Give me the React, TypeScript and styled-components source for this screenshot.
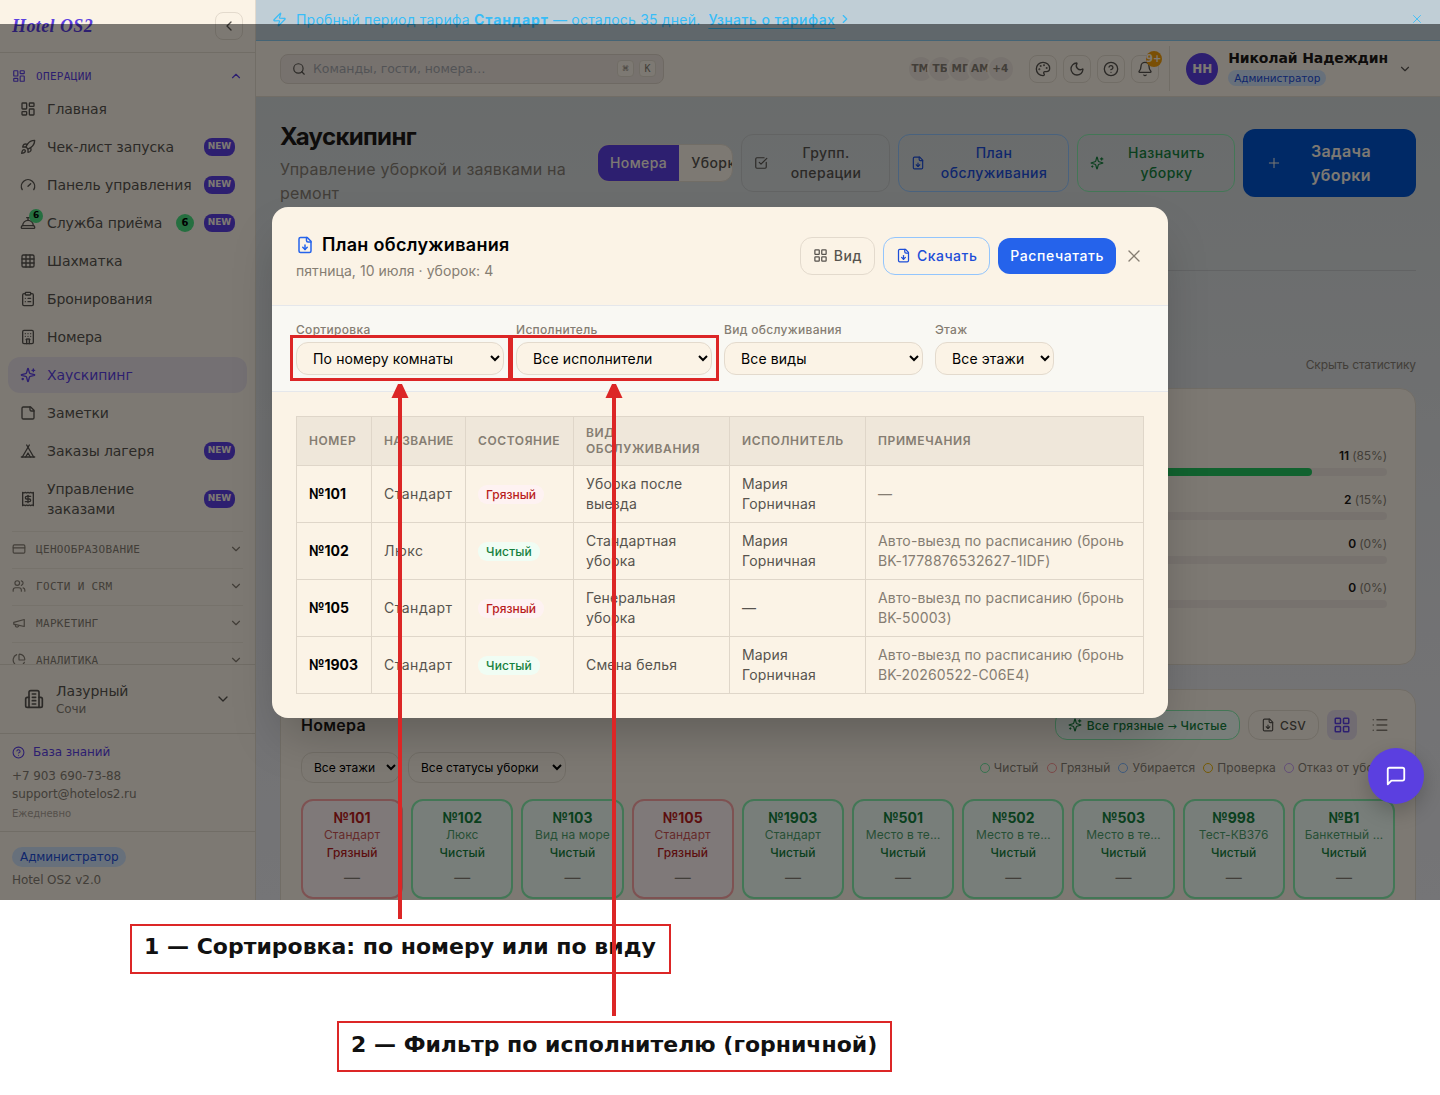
import React from "react";
import styled, { createGlobalStyle, css } from "styled-components";
import {
    Bell,
    ChartPie,
    ChevronDown,
    ChevronLeft,
    ChevronRight,
    ChevronUp,
    CircleQuestionMark,
    ClipboardList,
    ConciergeBell,
    CreditCard,
    Gauge,
    Grid3x3,
    Hotel,
    LayoutDashboard,
    LayoutGrid,
    List,
    Moon,
    Palette,
    Plus,
    Rocket,
    Search,
    SquareCheckBig,
    Tent,
    Users,
    X,
    Zap,
} from "lucide-react";

const colors = {
    cream: "#fbf3e6",
    line: "#e3dacd",
    faintLine: "#ede4d7",
    text: "#57534e",
    muted: "#857d72",
    violet: "#5b3fe0",
    red: "#dc2626",
};

const uiFont = `"DejaVu Sans", sans-serif`;
const inter = `Inter, "DejaVu Sans", sans-serif`;

type IconProps = { size?: number };
type IconType = React.ComponentType<IconProps>;

const strokeIcon = (...paths: string[]): IconType => {
    const StrokeIcon: React.FC<IconProps> = ({ size = 16 }) => (
        <svg
            width={size}
            height={size}
            viewBox="0 0 24 24"
            fill="none"
            stroke="currentColor"
            strokeWidth="2"
            strokeLinecap="round"
            strokeLinejoin="round"
        >
            {paths.map(d => (
                <path key={d} d={d} />
            ))}
        </svg>
    );

    return StrokeIcon;
};

const Sparkles = strokeIcon(
    "M9.937 15.5A2 2 0 0 0 8.5 14.063l-6.135-1.582a.5.5 0 0 1 0-.962L8.5 9.936A2 2 0 0 0 9.937 8.5l1.582-6.135a.5.5 0 0 1 .963 0L14.063 8.5A2 2 0 0 0 15.5 9.937l6.135 1.581a.5.5 0 0 1 0 .964L15.5 14.063a2 2 0 0 0-1.437 1.437l-1.582 6.135a.5.5 0 0 1-.963 0z",
    "M20 3v4",
    "M22 5h-4",
    "M4 17v2",
    "M5 18H3"
);

const FileDown = strokeIcon(
    "M15 2H6a2 2 0 0 0-2 2v16a2 2 0 0 0 2 2h12a2 2 0 0 0 2-2V7Z",
    "M14 2v4a2 2 0 0 0 2 2h4",
    "M12 18v-6",
    "m9 15 3 3 3-3"
);

const StickyNote = strokeIcon(
    "M16 3H5a2 2 0 0 0-2 2v14a2 2 0 0 0 2 2h14a2 2 0 0 0 2-2V8Z",
    "M15 3v4a2 2 0 0 0 2 2h4"
);

const Receipt = strokeIcon(
    "M4 2v20l2-1 2 1 2-1 2 1 2-1 2 1 2-1 2 1V2l-2 1-2-1-2 1-2-1-2 1-2-1-2 1Z",
    "M16 8h-6a2 2 0 1 0 0 4h4a2 2 0 1 1 0 4H8",
    "M12 17.5v-11"
);

const Megaphone = strokeIcon("m3 11 18-5v12L3 14v-3z", "M11.6 16.8a3 3 0 1 1-5.8-1.6");

const Building = strokeIcon(
    "M6 22V4a2 2 0 0 1 2-2h8a2 2 0 0 1 2 2v18Z",
    "M6 10H4a2 2 0 0 0-2 2v8a2 2 0 0 0 2 2h2",
    "M18 10h2a2 2 0 0 1 2 2v8a2 2 0 0 1-2 2h-2",
    "M10 6h4",
    "M10 10h4",
    "M10 14h4",
    "M10 18h4"
);

const MessageSquare = strokeIcon("M21 15a2 2 0 0 1-2 2H7l-4 4V5a2 2 0 0 1 2-2h14a2 2 0 0 1 2 2z");

type NavItem = {
    icon: IconType;
    label: string;
    isNew?: boolean;
    count?: number;
    active?: boolean;
};

const navItems: NavItem[] = [
    { icon: LayoutDashboard, label: "Главная" },
    { icon: Rocket, label: "Чек-лист запуска", isNew: true },
    { icon: Gauge, label: "Панель управления", isNew: true },
    { icon: ConciergeBell, label: "Служба приёма", isNew: true, count: 6 },
    { icon: Grid3x3, label: "Шахматка" },
    { icon: ClipboardList, label: "Бронирования" },
    { icon: Hotel, label: "Номера" },
    { icon: Sparkles, label: "Хаускипинг", active: true },
    { icon: StickyNote, label: "Заметки" },
    { icon: Tent, label: "Заказы лагеря", isNew: true },
    { icon: Receipt, label: "Управление заказами", isNew: true },
];

const navGroups: { icon: IconType; label: string }[] = [
    { icon: CreditCard, label: "Ценообразование" },
    { icon: Users, label: "Гости и CRM" },
    { icon: Megaphone, label: "Маркетинг" },
    { icon: ChartPie, label: "Аналитика" },
];

const stats = [
    { count: 11, percent: 85 },
    { count: 2, percent: 15 },
    { count: 0, percent: 0 },
    { count: 0, percent: 0 },
];

const legend = [
    { label: "Чистый", color: "#6ee7a0" },
    { label: "Грязный", color: "#f99393" },
    { label: "Убирается", color: "#7fb5fb" },
    { label: "Проверка", color: "#eab308" },
    { label: "Отказ от уборки", color: "#c79df3" },
];

const rooms = [
    { number: "№101", type: "Стандарт", dirty: true },
    { number: "№102", type: "Люкс" },
    { number: "№103", type: "Вид на море" },
    { number: "№105", type: "Стандарт", dirty: true },
    { number: "№1903", type: "Стандарт" },
    { number: "№501", type: "Место в те…" },
    { number: "№502", type: "Место в те…" },
    { number: "№503", type: "Место в те…" },
    { number: "№998", type: "Тест-КВ376" },
    { number: "№B1", type: "Банкетный …" },
];

const tasks = [
    { number: "№101", type: "Стандарт", dirty: true, service: "Уборка после выезда", assignee: "Мария Горничная", note: "—" },
    { number: "№102", type: "Люкс", dirty: false, service: "Стандартная уборка", assignee: "Мария Горничная", note: "Авто-выезд по расписанию (бронь BK-1778876532627-1IDF)" },
    { number: "№105", type: "Стандарт", dirty: true, service: "Генеральная уборка", assignee: "—", note: "Авто-выезд по расписанию (бронь BK-50003)" },
    { number: "№1903", type: "Стандарт", dirty: false, service: "Смена белья", assignee: "Мария Горничная", note: "Авто-выезд по расписанию (бронь BK-20260522-C06E4)" },
];

const filters = [
    { label: "Сортировка", value: "По номеру комнаты", width: 208 },
    { label: "Исполнитель", value: "Все исполнители", width: 196 },
    { label: "Вид обслуживания", value: "Все виды", width: 199 },
    { label: "Этаж", value: "Все этажи", width: 119 },
];

const Sidebar: React.FC = () => (
    <Aside>
        <Brand>
            <Logo>Hotel OS2</Logo>
            <CollapseButton>
                <ChevronLeft size={16} />
            </CollapseButton>
        </Brand>
        <Nav>
            <GroupTitle $open>
                <LayoutDashboard size={14} />
                <span>Операции</span>
                <ChevronUp size={14} />
            </GroupTitle>
            {navItems.map(({ icon: Icon, label, isNew, count, active }) => (
                <NavLink key={label} $active={active}>
                    <NavIcon>
                        <Icon size={16} />
                        {count && <IconCount>{count}</IconCount>}
                    </NavIcon>
                    <NavLabel>{label}</NavLabel>
                    {count && <Count>{count}</Count>}
                    {isNew && <NewBadge>NEW</NewBadge>}
                </NavLink>
            ))}
            {navGroups.map(({ icon: Icon, label }) => (
                <GroupTitle key={label}>
                    <Icon size={14} />
                    <span>{label}</span>
                    <ChevronDown size={14} />
                </GroupTitle>
            ))}
        </Nav>
        <Property>
            <Building size={20} />
            <PropertyText>
                <strong>Лазурный</strong>
                <span>Сочи</span>
            </PropertyText>
            <ChevronDown size={16} />
        </Property>
        <Support>
            <HelpLink>
                <CircleQuestionMark size={13} />
                База знаний
            </HelpLink>
            <span>+7 903 690-73-88</span>
            <span>support@hotelos2.ru</span>
            <small>Ежедневно</small>
        </Support>
        <Version>
            <RolePill $size={12}>Администратор</RolePill>
            <span>Hotel OS2 v2.0</span>
        </Version>
    </Aside>
);

const TopBar: React.FC = () => (
    <Header>
        <SearchBox>
            <Search size={14} />
            <span>Команды, гости, номера…</span>
            <Key>⌘</Key>
            <Key>K</Key>
        </SearchBox>
        <Avatars>
            {["TM", "ТБ", "МГ", "AM", "+4"].map(name => (
                <Avatar key={name}>{name}</Avatar>
            ))}
        </Avatars>
        <IconButtons>
            <IconButton>
                <Palette size={16} />
            </IconButton>
            <IconButton>
                <Moon size={16} />
            </IconButton>
            <IconButton>
                <CircleQuestionMark size={16} />
            </IconButton>
            <IconButton>
                <Bell size={16} />
                <BellCount>9+</BellCount>
            </IconButton>
        </IconButtons>
        <User>
            <UserAvatar>НН</UserAvatar>
            <UserText>
                <UserName>Николай Надеждин</UserName>
                <RolePill $size={10.5}>Администратор</RolePill>
            </UserText>
            <ChevronDown size={14} />
        </User>
    </Header>
);

const RoomsCard: React.FC = () => (
    <RoomsPanel>
        <RoomsHead>
            <h2>Номера</h2>
            <PillButton $tone="green">
                <Sparkles size={14} />
                <span>
                    Все грязные <Arrow>→</Arrow> Чистые
                </span>
            </PillButton>
            <PillButton>
                <FileDown size={14} />
                CSV
            </PillButton>
            <ViewSwitch>
                <ViewButton $active>
                    <LayoutGrid size={18} />
                </ViewButton>
                <ViewButton>
                    <List size={18} />
                </ViewButton>
            </ViewSwitch>
        </RoomsHead>
        <RoomsFilters>
            <Select $width={99} $small defaultValue="a">
                <option value="a">Все этажи</option>
            </Select>
            <Select $width={158} $small defaultValue="a">
                <option value="a">Все статусы уборки</option>
            </Select>
            <Legend>
                {legend.map(({ label, color }) => (
                    <LegendItem key={label} $color={color}>
                        {label}
                    </LegendItem>
                ))}
            </Legend>
        </RoomsFilters>
        <RoomGrid>
            {rooms.map(({ number, type, dirty }) => (
                <Room key={number} $dirty={dirty}>
                    <RoomNumber>{number}</RoomNumber>
                    <RoomType>{type}</RoomType>
                    <RoomState>{dirty ? "Грязный" : "Чистый"}</RoomState>
                    <RoomGuest>—</RoomGuest>
                </Room>
            ))}
        </RoomGrid>
    </RoomsPanel>
);

const PlanDialog: React.FC = () => (
    <Dialog role="dialog">
        <DialogHead>
            <DialogTitles>
                <DialogTitle>
                    <FileDown size={18} />
                    План обслуживания
                </DialogTitle>
                <DialogDate>пятница, 10 июля · уборок: 4</DialogDate>
            </DialogTitles>
            <DialogButton>
                <LayoutGrid size={15} />
                Вид
            </DialogButton>
            <DialogButton $tone="outline">
                <FileDown size={15} />
                Скачать
            </DialogButton>
            <DialogButton $tone="primary">Распечатать</DialogButton>
            <CloseButton>
                <X size={20} strokeWidth={1.6} />
            </CloseButton>
        </DialogHead>
        <DialogFilters>
            {filters.map(({ label, value, width }) => (
                <Field key={label}>
                    {label}
                    <Select $width={width} defaultValue={value}>
                        <option value={value}>{value}</option>
                    </Select>
                </Field>
            ))}
        </DialogFilters>
        <DialogBody>
            <Table>
                <colgroup>
                    {[75, 94, 108, 156, 136, 278].map(width => (
                        <col key={width} width={width} />
                    ))}
                </colgroup>
                <thead>
                    <tr>
                        <th>Номер</th>
                        <th>Название</th>
                        <th>Состояние</th>
                        <th>Вид обслуживания</th>
                        <th>Исполнитель</th>
                        <th>Примечания</th>
                    </tr>
                </thead>
                <tbody>
                    {tasks.map(task => (
                        <tr key={task.number}>
                            <RoomCell>{task.number}</RoomCell>
                            <TypeCell>{task.type}</TypeCell>
                            <td>
                                <StateChip $dirty={task.dirty}>{task.dirty ? "Грязный" : "Чистый"}</StateChip>
                            </td>
                            <td>{task.service}</td>
                            <td>{task.assignee}</td>
                            <NoteCell>{task.note}</NoteCell>
                        </tr>
                    ))}
                </tbody>
            </Table>
        </DialogBody>
    </Dialog>
);

const App: React.FC = () => (
    <Sheet>
        <GlobalStyle />
        <Screen>
            <Sidebar />
            <Main>
                <TrialBanner>
                    <Zap size={15} />
                    <span>
                        Пробный период тарифа <b>Стандарт</b> — осталось 35 дней.
                    </span>
                    <TrialLink>Узнать о тарифах</TrialLink>
                    <ChevronRight size={14} />
                    <TrialClose>
                        <X size={14} strokeWidth={1.5} />
                    </TrialClose>
                </TrialBanner>
                <TopBar />
                <Content>
                    <PageHead>
                        <PageTitles>
                            <h1>Хаускипинг</h1>
                            <p>Управление уборкой и заявками на ремонт</p>
                        </PageTitles>
                        <Toggle>
                            <ToggleItem $active>Номера</ToggleItem>
                            <ToggleItem>Уборки</ToggleItem>
                        </Toggle>
                        <ActionButton $width={149}>
                            <SquareCheckBig size={14} />
                            <span>Групп. операции</span>
                        </ActionButton>
                        <ActionButton $width={171} $tone="blue">
                            <FileDown size={14} />
                            <span>План обслуживания</span>
                        </ActionButton>
                        <ActionButton $width={158} $tone="green">
                            <Sparkles size={14} />
                            <span>Назначить уборку</span>
                        </ActionButton>
                        <ActionButton $width={173} $tone="primary">
                            <Plus size={16} strokeWidth={1.5} />
                            <span>Задача уборки</span>
                        </ActionButton>
                    </PageHead>
                    <Tabs />
                    <StatsToggle>Скрыть статистику</StatsToggle>
                    <StatsPanel>
                        <StatsList>
                            {stats.map(({ count, percent }, index) => (
                                <Stat key={index}>
                                    <StatValue>
                                        <b>{count}</b> ({percent}%)
                                    </StatValue>
                                    <Track>
                                        <Fill style={{ width: `${percent}%` }} />
                                    </Track>
                                </Stat>
                            ))}
                        </StatsList>
                    </StatsPanel>
                    <RoomsCard />
                </Content>
            </Main>
            <Backdrop>
                <PlanDialog />
            </Backdrop>
            <ChatButton>
                <MessageSquare size={22} />
            </ChatButton>
        </Screen>
        <Callout $left={130} $top={24} $width={541}>
            1 — Сортировка: по номеру или по виду
        </Callout>
        <Callout $left={337} $top={47} $width={555}>
            2 — Фильтр по исполнителю (горничной)
        </Callout>
        <Marks width="1440" height="1095" viewBox="0 0 1440 1095">
            <g fill="none" stroke={colors.red} strokeWidth="3">
                <rect x="291.5" y="336.5" width="218" height="43" />
                <rect x="511.5" y="336.5" width="206" height="43" />
            </g>
            <g fill={colors.red}>
                <rect x="398" y="384" width="4" height="535" />
                <path d="M398 384h4l6.5 14h-17z" />
                <rect x="612" y="384" width="4" height="632" />
                <path d="M612 384h4l6.5 14h-17z" />
            </g>
        </Marks>
    </Sheet>
);

const GlobalStyle = createGlobalStyle`
    *,
    *::before {
        box-sizing: border-box;
    }

    body {
        margin: 0;
        background: #fff;
        font-family: ${inter};
        color: ${colors.text};
    }

    h1, h2, p {
        margin: 0;
    }

    svg {
        flex: none;
    }
`;

const Sheet = styled.div`
    position: relative;
    width: 1440px;
    height: 1095px;
    overflow: hidden;
`;

const Screen = styled.div`
    position: relative;
    display: flex;
    width: 1440px;
    height: 900px;
    overflow: hidden;
`;

const Aside = styled.aside`
    display: flex;
    flex-direction: column;
    width: 256px;
    border-right: 1px solid ${colors.line};
    background: ${colors.cream};
    font-family: ${uiFont};
    letter-spacing: -0.08px;
`;

const Brand = styled.div`
    display: flex;
    align-items: center;
    justify-content: space-between;
    height: 53px;
    padding: 0 12px;
    border-bottom: 1px solid ${colors.line};
`;

const Logo = styled.div`
    color: ${colors.violet};
    font: italic 700 18px "Liberation Serif", serif;
    letter-spacing: 0.4px;
`;

const CollapseButton = styled.div`
    display: grid;
    place-items: center;
    width: 28px;
    height: 28px;
    border: 1px solid ${colors.line};
    border-radius: 8px;
`;

const Nav = styled.nav`
    flex: 1;
    min-height: 0;
    overflow: hidden;
    padding: 8px 8px 0;
`;

const GroupTitle = styled.div<{ $open?: boolean }>`
    display: flex;
    align-items: center;
    gap: 10px;
    height: ${props => (props.$open ? "30px" : "37px")};
    margin: 0 4px;
    padding-bottom: ${props => (props.$open ? "0" : "2px")};
    border-top: ${props => (props.$open ? "none" : `1px solid ${colors.faintLine}`)};
    color: ${props => (props.$open ? colors.violet : colors.muted)};
    font: 11px "DejaVu Sans Mono", monospace;
    letter-spacing: 0.33px;
    text-transform: uppercase;

    span {
        flex: 1;
    }
`;

const NavLink = styled.div<{ $active?: boolean }>`
    display: flex;
    align-items: center;
    min-height: 36px;
    margin-bottom: 2px;
    padding: 8px 12px;
    border-radius: 12px;
    background: ${props => (props.$active ? "#e9e1e6" : "none")};
    color: ${props => (props.$active ? colors.violet : colors.text)};
    font-size: 14px;
    line-height: 20px;

    &:nth-last-child(5) {
        margin-bottom: 4px;
    }
`;

const NavIcon = styled.span`
    position: relative;
    display: flex;
    margin-right: 11px;
`;

const IconCount = styled.span`
    position: absolute;
    top: -6px;
    right: -7px;
    width: 14px;
    height: 14px;
    border-radius: 50%;
    background: #4ade80;
    color: #000;
    font-size: 9px;
    font-weight: 700;
    line-height: 13px;
    text-align: center;
`;

const NavLabel = styled.span`
    flex: 1;
`;

const Count = styled.span`
    width: 18px;
    height: 18px;
    margin-right: 10px;
    border-radius: 50%;
    background: #4ade80;
    color: #000;
    font-size: 10px;
    font-weight: 700;
    line-height: 18px;
    text-align: center;
`;

const NewBadge = styled.span`
    width: 31px;
    height: 18px;
    border-radius: 8px;
    background: ${colors.violet};
    color: ${colors.cream};
    font-size: 9px;
    font-weight: 700;
    line-height: 16px;
    text-align: center;
`;

const Property = styled.div`
    display: flex;
    align-items: center;
    gap: 12px;
    height: 69px;
    padding: 0 24px;
    border-top: 1px solid ${colors.line};
`;

const PropertyText = styled.div`
    display: flex;
    flex: 1;
    flex-direction: column;

    strong {
        font-size: 14px;
        font-weight: 400;
        line-height: 20px;
    }

    span {
        color: ${colors.muted};
        font-size: 12px;
        line-height: 16px;
    }
`;

const Support = styled.div`
    display: flex;
    flex-direction: column;
    height: 98px;
    padding: 10px 12px 0;
    border-top: 1px solid ${colors.line};
    color: ${colors.muted};
    font-size: 12px;
    line-height: 18px;

    small {
        margin-top: 2px;
        color: #aaa196;
        font-size: 10px;
    }
`;

const HelpLink = styled.div`
    display: flex;
    align-items: center;
    gap: 8px;
    height: 16px;
    margin-bottom: 7px;
    color: ${colors.violet};
`;

const Version = styled.div`
    display: flex;
    flex-direction: column;
    align-items: flex-start;
    gap: 4px;
    height: 69px;
    padding: 15px 12px 0;
    border-top: 1px solid ${colors.line};
    color: ${colors.muted};
    font-size: 12px;
    line-height: 18px;
`;

const RolePill = styled.span<{ $size: number }>`
    padding: ${props => (props.$size > 11 ? "1px 8px" : "0 6px")};
    border-radius: 10px;
    background: #cfe0f7;
    color: #1d4ed8;
    font-size: ${props => props.$size}px;
    line-height: ${props => (props.$size > 11 ? "18px" : "16px")};
    letter-spacing: -0.08px;
`;

const Main = styled.main`
    display: flex;
    flex: 1;
    flex-direction: column;
    min-width: 0;
    background: linear-gradient(180deg, #d3d8d8 10%, #e5e5e8 70%, #eaeaee 100%);
`;

const TrialBanner = styled.div`
    display: flex;
    flex: none;
    align-items: center;
    height: 41px;
    padding: 0 16px 2px;
    border-bottom: 1px solid #8ac9ea;
    background: #c0ced6;
    color: #38bdf8;
    font-size: 14px;
    letter-spacing: 0.2px;

    > svg:first-child {
        margin-right: 9px;
    }

    b {
        letter-spacing: 0.9px;
    }
`;

const TrialLink = styled.span`
    margin: 0 3px 0 8px;
    font-weight: 500;
    letter-spacing: 0.45px;
    text-decoration: underline;
    text-underline-offset: 3px;
`;

const TrialClose = styled.span`
    display: flex;
    margin-left: auto;
`;

const Header = styled.header`
    display: flex;
    flex: none;
    align-items: center;
    height: 56px;
    padding: 0 28px 0 24px;
    border-bottom: 1px solid ${colors.line};
    background: ${colors.cream};
    font-family: ${uiFont};
`;

const SearchBox = styled.div`
    display: flex;
    align-items: center;
    gap: 5px;
    width: 384px;
    height: 30px;
    padding: 0 7px 0 11px;
    border: 1px solid #ddd3c7;
    border-radius: 8px;
    background: #efe5dc;
    color: ${colors.text};

    > span:nth-child(2) {
        flex: 1;
        margin-left: 2px;
        color: #a5a7ac;
        font-size: 12.5px;
        letter-spacing: -0.06px;
    }
`;

const Key = styled.span`
    width: 17px;
    height: 17px;
    border: 1px solid ${colors.line};
    border-radius: 4px;
    background: ${colors.cream};
    color: ${colors.muted};
    font: 10px/15px "DejaVu Sans Mono", monospace;
    text-align: center;
`;

const Avatars = styled.div`
    display: flex;
    margin-left: auto;
`;

const Avatar = styled.span`
    width: 28px;
    height: 28px;
    margin-right: -8px;
    border: 2px solid ${colors.cream};
    border-radius: 50%;
    background: #efe5dc;
    color: ${colors.muted};
    font-size: 10.5px;
    font-weight: 700;
    line-height: 23px;
    text-align: center;
    text-indent: -2px;
    overflow: hidden;
`;

const IconButtons = styled.div`
    display: flex;
    gap: 6px;
    margin: 0 10px 0 22px;
`;

const IconButton = styled.span`
    position: relative;
    display: grid;
    place-items: center;
    width: 28px;
    height: 28px;
    border: 1px solid ${colors.line};
    border-radius: 8px;
`;

const BellCount = styled.span`
    position: absolute;
    top: -5px;
    right: -4px;
    width: 16px;
    height: 16px;
    border-radius: 50%;
    background: #f59e0b;
    color: ${colors.cream};
    font-size: 10px;
    font-weight: 700;
    line-height: 16px;
    text-align: center;
    text-indent: -1px;
`;

const User = styled.div`
    display: flex;
    align-items: center;
    gap: 10px;
    height: 45px;
    padding-left: 16px;
    border-left: 1px solid ${colors.line};
`;

const UserAvatar = styled.span`
    width: 32px;
    height: 32px;
    border-radius: 50%;
    background: ${colors.violet};
    color: ${colors.cream};
    font-size: 12px;
    font-weight: 700;
    line-height: 32px;
    text-align: center;
`;

const UserText = styled.div`
    display: flex;
    flex-direction: column;
    align-items: flex-start;
    gap: 2px;
    padding-bottom: 3px;
`;

const UserName = styled.span`
    color: #1c1917;
    font-size: 14px;
    font-weight: 700;
    line-height: 20px;
    letter-spacing: -0.12px;
`;

const Content = styled.div`
    display: flex;
    flex-direction: column;
    padding: 24px 24px 0;
`;

const PageHead = styled.div`
    display: flex;
    align-items: center;
    gap: 8px;
    height: 84px;
`;

const PageTitles = styled.div`
    width: 309px;
    padding-right: 18px;

    h1 {
        margin-bottom: 4px;
        color: #1c1917;
        font-size: 24px;
        line-height: 32px;
        letter-spacing: -0.65px;
    }

    p {
        color: ${colors.muted};
        font-size: 16px;
        line-height: 24px;
        letter-spacing: 0.22px;
    }
`;

const Toggle = styled.div`
    display: flex;
    width: 136px;
    height: 38px;
    border: 1px solid ${colors.line};
    border-radius: 12px;
    background: ${colors.cream};
    overflow: hidden;
`;

const ToggleItem = styled.span<{ $active?: boolean }>`
    flex: none;
    padding: 0 12px;
    background: ${props => (props.$active ? colors.violet : "none")};
    color: ${props => (props.$active ? colors.cream : colors.text)};
    font-size: 14px;
    font-weight: 500;
    line-height: 36px;
    letter-spacing: 0.4px;
`;

const actionTones = {
    plain: css`
        border-color: #c5c7c7;
    `,
    blue: css`
        border-color: #93c5fd;
        color: #1d4ed8;
    `,
    green: css`
        border-color: #86efac;
        color: #15803d;
    `,
    primary: css`
        height: 68px;
        padding: 0 23px;
        border: none;
        background: #0052cc;
        color: ${colors.cream};
        font-size: 16px;
        font-weight: 600;
        line-height: 24px;
    `,
};

const ActionButton = styled.div<{ $width: number; $tone?: keyof typeof actionTones }>`
    display: flex;
    align-items: center;
    width: ${props => props.$width}px;
    height: 58px;
    padding: 0 12px;
    border: 1px solid;
    border-radius: 12px;
    font-size: 14px;
    font-weight: 500;
    line-height: 20px;
    letter-spacing: 0.4px;
    text-align: center;
    ${props => actionTones[props.$tone ?? "plain"]}

    span {
        flex: 1;
        padding-left: 7px;
    }
`;

const Tabs = styled.div`
    height: 42px;
    margin-top: 24px;
    border-bottom: 1px solid #c5c7c8;
`;

const StatsToggle = styled.div`
    margin-top: 86px;
    color: ${colors.muted};
    font-size: 12px;
    line-height: 16px;
    letter-spacing: -0.12px;
    text-align: right;
`;

const StatsPanel = styled.section`
    display: flex;
    justify-content: flex-end;
    height: 277px;
    margin: 15px 0 24px;
    padding: 55px 28px 0;
    border: 1px solid ${colors.line};
    border-radius: 16px;
    background: ${colors.cream};
`;

const StatsList = styled.div`
    width: 500px;
`;

const Stat = styled.div`
    margin-bottom: 12px;
`;

const StatValue = styled.div`
    margin-bottom: 4px;
    padding-top: 4px;
    color: ${colors.muted};
    font-size: 12px;
    line-height: 16px;
    letter-spacing: -0.1px;
    text-align: right;

    b {
        color: #1c1917;
        font-weight: 600;
    }
`;

const Track = styled.div`
    height: 8px;
    border-radius: 4px;
    background: #efe5dc;
    overflow: hidden;
`;

const Fill = styled.div`
    height: 100%;
    border-radius: 4px;
    background: #22c55e;
`;

const RoomsPanel = styled.section`
    padding: 20px;
    border: 1px solid ${colors.line};
    border-radius: 16px;
    background: ${colors.cream};
`;

const RoomsHead = styled.div`
    display: flex;
    align-items: center;
    gap: 8px;
    height: 30px;

    h2 {
        flex: 1;
        color: #1c1917;
        font-size: 16px;
        font-weight: 600;
        letter-spacing: 0.3px;
    }
`;

const PillButton = styled.div<{ $tone?: "green" }>`
    display: flex;
    align-items: center;
    gap: 5px;
    height: 30px;
    padding: 0 12px;
    border: 1px solid ${props => (props.$tone ? "#86efac" : colors.line)};
    border-radius: 12px;
    background: ${props => (props.$tone ? "#f0fdf4" : "none")};
    color: ${props => (props.$tone ? "#15803d" : colors.text)};
    font-size: 12px;
    font-weight: 500;
    letter-spacing: 0.3px;
`;

const Arrow = styled.span`
    font-family: "DejaVu Sans", sans-serif;
    font-size: 11px;
    font-weight: 400;
`;

const ViewSwitch = styled.div`
    display: flex;
    gap: 8px;
`;

const ViewButton = styled.span<{ $active?: boolean }>`
    display: grid;
    place-items: center;
    width: 30px;
    height: 30px;
    border-radius: 8px;
    background: ${props => (props.$active ? "#e2d9e5" : "none")};
    color: ${props => (props.$active ? colors.violet : colors.muted)};
`;

const RoomsFilters = styled.div`
    display: flex;
    align-items: center;
    gap: 8px;
    margin: 12px 0 16px;
`;

const Select = styled.select<{ $width: number; $small?: boolean }>`
    width: ${props => props.$width}px;
    height: ${props => (props.$small ? 31 : 33)}px;
    padding: 0 0 0 ${props => (props.$small ? 8 : 12)}px;
    border: 1px solid ${colors.line};
    border-radius: 12px;
    background: ${colors.cream};
    color: #000;
    font: ${props => (props.$small ? 12 : 14)}px ${inter};
    letter-spacing: ${props => (props.$small ? 0 : 0.13)}px;
`;

const Legend = styled.div`
    display: flex;
    gap: 8px;
    margin-left: auto;
`;

const LegendItem = styled.span<{ $color: string }>`
    display: flex;
    align-items: center;
    gap: 4px;
    color: ${colors.muted};
    font-size: 12px;
    letter-spacing: 0.1px;
    white-space: nowrap;

    &::before {
        content: "";
        width: 10px;
        height: 10px;
        border: 1px solid ${props => props.$color};
        border-radius: 50%;
    }
`;

const RoomGrid = styled.div`
    display: grid;
    grid-template-columns: repeat(10, minmax(0, 1fr));
    gap: 8px;
`;

const Room = styled.div<{ $dirty?: boolean }>`
    height: 100px;
    padding: 8px;
    border: 2px solid ${props => (props.$dirty ? "#fca5a5" : "#86efac")};
    border-radius: 12px;
    background: ${props => (props.$dirty ? "#fef2f2" : "#f0fdf4")};
    color: ${props => (props.$dirty ? "#b91c1c" : "#15803d")};
    text-align: center;
`;

const RoomNumber = styled.div`
    font-size: 14px;
    font-weight: 700;
    line-height: 18px;
`;

const RoomType = styled.div`
    font-size: 12px;
    line-height: 16px;
    letter-spacing: 0.1px;
    opacity: 0.75;
    white-space: nowrap;
`;

const RoomState = styled.div`
    margin-top: 2px;
    font-size: 12px;
    font-weight: 500;
    line-height: 16px;
    letter-spacing: 0.1px;
`;

const RoomGuest = styled.div`
    margin-top: 4px;
    color: ${colors.muted};
    font-size: 16px;
    line-height: 24px;
`;

const Backdrop = styled.div`
    position: absolute;
    inset: 24px 0 0;
    display: flex;
    align-items: center;
    justify-content: center;
    padding-top: 1px;
    background: rgba(0, 0, 0, 0.5);
`;

const Dialog = styled.div`
    width: 896px;
    border-radius: 16px;
    background: ${colors.cream};
    box-shadow: 0 25px 50px -12px rgba(0, 0, 0, 0.25);
    overflow: hidden;
`;

const DialogHead = styled.div`
    display: flex;
    align-items: center;
    gap: 8px;
    height: 99px;
    padding: 0 24px;
    border-bottom: 1px solid #e5e7eb;
`;

const DialogTitles = styled.div`
    flex: 1;
`;

const DialogTitle = styled.div`
    display: flex;
    align-items: center;
    gap: 8px;
    color: #000;
    font-size: 18px;
    font-weight: 600;
    line-height: 28px;
    letter-spacing: 0.3px;

    svg {
        color: #2563eb;
    }
`;

const DialogDate = styled.div`
    margin-top: 2px;
    color: ${colors.muted};
    font-size: 14px;
    line-height: 20px;
    letter-spacing: 0.05px;
`;

const dialogTones = {
    plain: css`
        border-color: ${colors.line};
        letter-spacing: 0.55px;
    `,
    outline: css`
        border-color: #93c5fd;
        color: #1d4ed8;
        letter-spacing: 0.47px;
    `,
    primary: css`
        height: 36px;
        border: none;
        background: #2563eb;
        color: #fff;
        letter-spacing: 0.58px;
    `,
};

const DialogButton = styled.div<{ $tone?: keyof typeof dialogTones }>`
    display: flex;
    align-items: center;
    gap: 6px;
    height: 38px;
    padding: 0 12px 1px;
    border: 1px solid;
    border-radius: 12px;
    font-size: 14px;
    font-weight: 500;
    ${props => dialogTones[props.$tone ?? "plain"]}
`;

const CloseButton = styled.span`
    display: flex;
    color: ${colors.muted};
`;

const DialogFilters = styled.div`
    display: flex;
    gap: 12px;
    padding: 16px 24px;
    border-bottom: 1px solid #e5e7eb;
    background: #f9f8f3;
`;

const Field = styled.label`
    display: flex;
    flex-direction: column;
    gap: 4px;
    color: ${colors.muted};
    font-size: 12px;
    font-weight: 500;
    line-height: 16px;
    letter-spacing: 0.3px;
`;

const DialogBody = styled.div`
    padding: 24px;
`;

const Table = styled.table`
    width: 848px;
    border-collapse: collapse;
    table-layout: fixed;
    font-size: 14px;
    line-height: 20px;
    letter-spacing: 0.16px;

    th,
    td {
        padding: 8px 12px;
        border: 1px solid #dfd6c9;
        text-align: left;
    }

    th {
        background: #efe7da;
        color: ${colors.muted};
        font-size: 12px;
        font-weight: 600;
        line-height: 16px;
        letter-spacing: 0.6px;
        text-transform: uppercase;
    }

    th:nth-child(2) {
        letter-spacing: 0.3px;
    }

    td {
        height: 57px;
    }
`;

const RoomCell = styled.td`
    color: #000;
    font-weight: 700;
    letter-spacing: 0;
`;

const TypeCell = styled.td`
    letter-spacing: 0.5px;
`;

const NoteCell = styled.td`
    color: ${colors.muted};
`;

const StateChip = styled.span<{ $dirty: boolean }>`
    display: inline-block;
    padding: 1px 8px;
    border-radius: 9px;
    background: ${props => (props.$dirty ? "#fef2f2" : "#f0fdf4")};
    color: ${props => (props.$dirty ? "#b91c1c" : "#15803d")};
    font-size: 12px;
    font-weight: 500;
    line-height: 17px;
    letter-spacing: ${props => (props.$dirty ? 0 : 0.2)}px;
`;

const ChatButton = styled.div`
    position: absolute;
    right: 16px;
    bottom: 96px;
    display: grid;
    place-items: center;
    width: 56px;
    height: 56px;
    border-radius: 50%;
    background: ${colors.violet};
    box-shadow: 0 8px 20px rgba(0, 0, 0, 0.2);
    color: #fff;
`;

const Callout = styled.div<{ $left: number; $top: number; $width: number }>`
    display: flex;
    align-items: flex-start;
    width: ${props => props.$width}px;
    height: ${props => (props.$top > 24 ? 51 : 50)}px;
    margin: ${props => props.$top}px 0 0 ${props => props.$left}px;
    padding: ${props => (props.$top > 24 ? 8 : 7)}px 12px;
    border: 2px solid ${colors.red};
    background: #fff;
    color: #111;
    font: 700 22px/28px ${uiFont};
    white-space: nowrap;
`;

const Marks = styled.svg`
    position: absolute;
    inset: 0;
`;

export default App;
